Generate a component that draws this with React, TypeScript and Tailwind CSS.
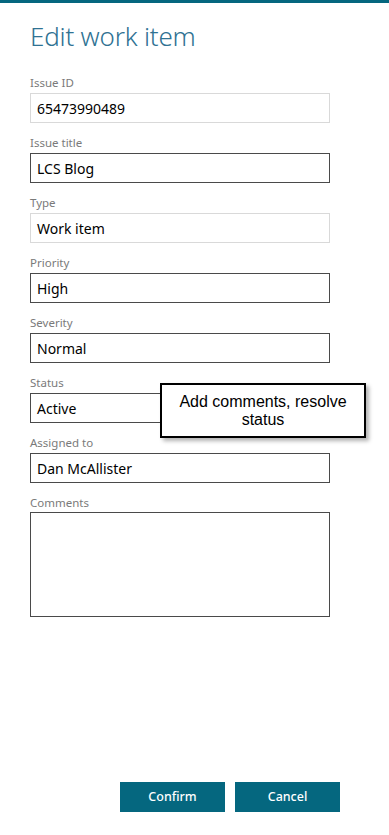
import React from 'react';

const fields: { label: string; value: string; readOnly?: boolean }[] = [
  { label: 'Issue ID', value: '65473990489', readOnly: true },
  { label: 'Issue title', value: 'LCS Blog' },
  { label: 'Type', value: 'Work item', readOnly: true },
  { label: 'Priority', value: 'High' },
  { label: 'Severity', value: 'Normal' },
  { label: 'Status', value: 'Active' },
  { label: 'Assigned to', value: 'Dan McAllister' },
];

const font = { fontFamily: '"Segoe UI", "Noto Sans", "Open Sans", sans-serif' };

export default function App() {
  return (
    <div className="relative w-[389px] h-[835px] bg-white overflow-hidden" style={font}>
      <div className="h-[3px] bg-[#05677f]" />

      <div className="pl-[30px]">
        <h1 className="mt-[14px] h-[38px] text-[26px] leading-[38px] font-light text-[#2f7293] tracking-[-0.2px]">
          Edit work item
        </h1>

        <div className="mt-[21px]">
          {fields.map((f) => (
            <div key={f.label} className="mb-[13px]">
              <div className="h-[17px] text-[11.5px] leading-[14px] text-[#7a7a7a]">{f.label}</div>
              <div
                className={
                  'w-[300px] h-[30px] flex items-center px-[6px] text-[14px] text-black ' +
                  (f.readOnly ? 'border border-[#d9d9d9]' : 'border border-[#4a4a4a]')
                }
              >
                {f.value}
              </div>
            </div>
          ))}

          <div className="h-[16px] text-[11.5px] leading-[14px] text-[#7a7a7a]">Comments</div>
          <div className="w-[300px] h-[105px] border border-[#4a4a4a]" />
        </div>
      </div>

      {/* callout */}
      <div
        className="absolute left-[160px] top-[383px] w-[206px] h-[55px] border-2 border-black bg-white flex items-center justify-center text-center text-[16px] leading-[18px] text-black shadow-[3px_3px_4px_rgba(0,0,0,0.3)]"
        style={{ fontFamily: '"Liberation Sans", Arial, sans-serif' }}
      >
        Add comments, resolve
        <br />
        status
      </div>

      <div className="absolute left-[120px] top-[782px] flex gap-[10px]">
        <button className="w-[105px] h-[30px] bg-[#05677f] text-white text-[12.5px] font-medium">Confirm</button>
        <button className="w-[105px] h-[30px] bg-[#05677f] text-white text-[12.5px] font-medium">Cancel</button>
      </div>
    </div>
  );
}
